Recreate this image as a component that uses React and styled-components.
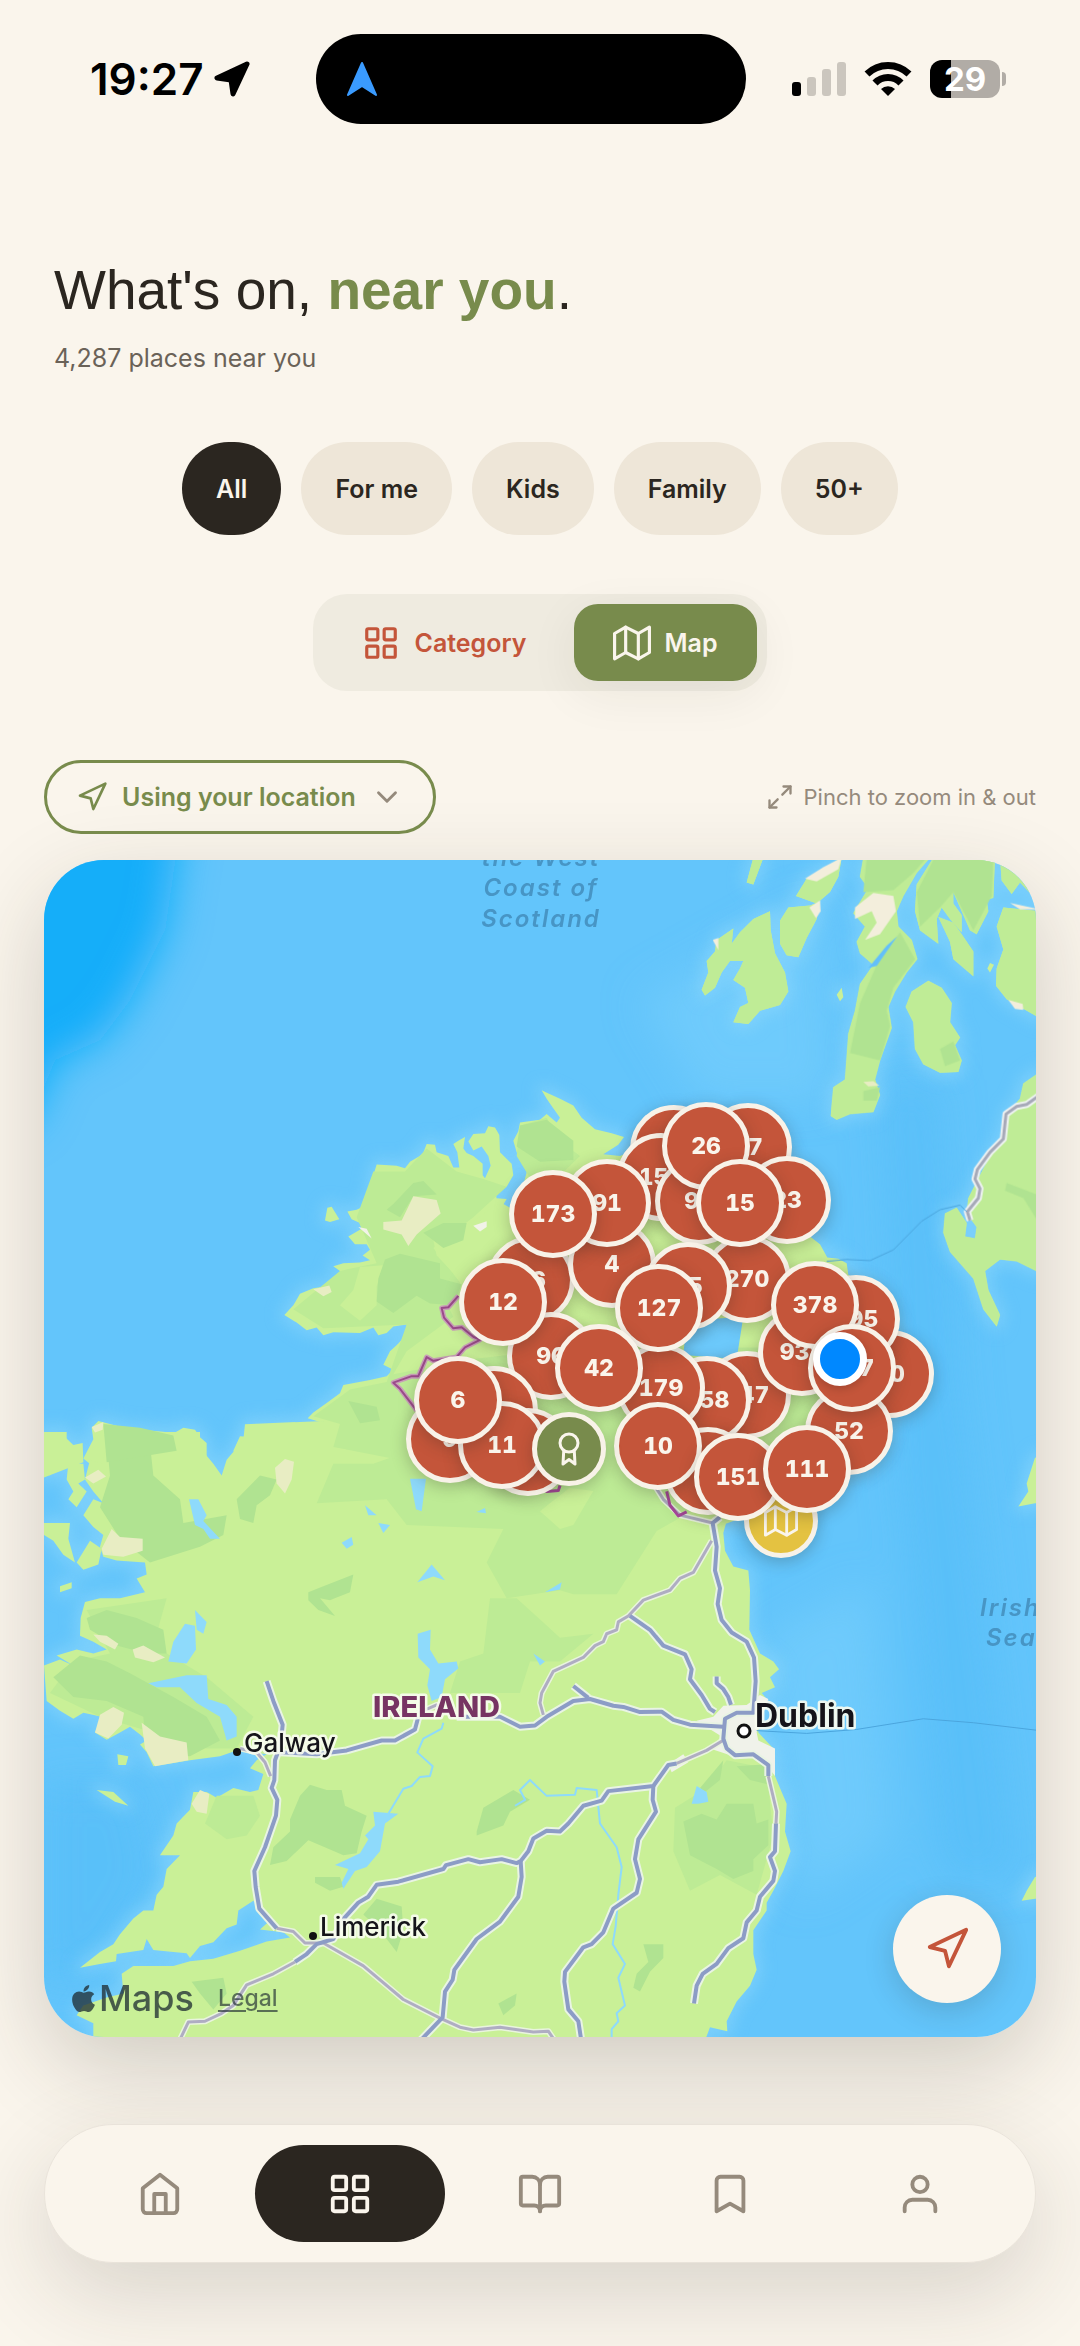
import React, { useState } from "react";
import styled, { createGlobalStyle } from "styled-components";
import { FaApple } from "react-icons/fa";

const color = {
  cream: "#faf5ec",
  ink: "#2b2620",
  sand: "#eee6d8",
  muted: "#958a7c",
  olive: "#788b4c",
  clay: "#c4553a",
  gold: "#e4c241",
};

const GlobalStyle = createGlobalStyle`
  * { box-sizing: border-box; }
  body { margin: 0; background: ${color.cream}; }
  button, select { font: inherit; color: inherit; border: 0; background: none; padding: 0; cursor: pointer; }
`;

const Page = styled.div`
  min-height: 100vh;
  display: flex;
  flex-direction: column;
  background: ${color.cream};
  color: ${color.ink};
  font-family: Inter, "Liberation Sans", sans-serif;
  overflow: hidden;
`;

/* ---------- status bar ---------- */

const StatusBar = styled.header`
  display: grid;
  grid-template-columns: 1fr 430px 1fr;
  align-items: center;
  padding: 34px 18px 0 0;
  color: #000;
`;
const Clock = styled.div`
  display: flex;
  align-items: center;
  gap: 10px;
  padding-left: 90px;
  font-size: 44px;
  line-height: 52px;
  font-weight: 600;
`;
const Island = styled.div`
  height: 90px;
  border-radius: 45px;
  background: #000;
  display: flex;
  align-items: center;
  padding-left: 30px;
`;
const Indicators = styled.div`
  display: flex;
  align-items: center;
  justify-content: flex-end;
  gap: 18px;
  padding-right: 56px;
`;
const Battery = styled.div`
  display: flex;
  align-items: center;
  gap: 2px;
  &::after {
    content: "";
    width: 4px;
    height: 14px;
    border-radius: 0 4px 4px 0;
    background: #b1aca6;
  }
`;
const BatteryCell = styled.div`
  width: 70px;
  height: 38px;
  border-radius: 12px;
  background: linear-gradient(to right, #000 30%, #b1aca6 30%);
  color: #fff;
  font-size: 33px;
  line-height: 38px;
  font-weight: 700;
  text-align: center;
`;

/* ---------- heading and filters ---------- */

const Intro = styled.section`
  padding: 128px 54px 0;
`;
const Title = styled.h1`
  margin: 0;
  font-family: "Liberation Sans", Arial, sans-serif;
  font-size: 55px;
  line-height: 76px;
  font-weight: 400;
  strong { color: ${color.olive}; font-weight: 700; }
`;
const Subtitle = styled.p`
  margin: 14px 0 0;
  font-size: 25px;
  line-height: 32px;
  color: #6a6258;
`;
const Chips = styled.div`
  display: flex;
  justify-content: center;
  gap: 20px;
  margin-top: 68px;
`;
const Chip = styled.button`
  && {
    height: 93px;
    padding: 0 34px;
    border-radius: 47px;
    font-size: 25px;
    font-weight: 600;
    background: ${(p) => (p.$on ? color.ink : color.sand)};
    color: ${(p) => (p.$on ? color.cream : color.ink)};
  }
`;
const Toggle = styled.div`
  align-self: center;
  display: flex;
  gap: 8px;
  margin-top: 59px;
  padding: 10px;
  border-radius: 34px;
  background: #efebe0;
`;
const ToggleButton = styled.button`
  && {
    display: flex;
    align-items: center;
    gap: 14px;
    height: 77px;
    padding: 0 39px;
    border-radius: 24px;
    font-size: 25px;
    font-weight: 600;
    background: ${(p) => (p.$on ? color.olive : "transparent")};
    color: ${(p) => (p.$on ? color.cream : color.clay)};
    box-shadow: ${(p) => (p.$on ? "0 12px 50px rgba(43, 38, 32, 0.07)" : "none")};
  }
`;

/* ---------- map ---------- */

const MapTools = styled.div`
  display: flex;
  align-items: center;
  justify-content: space-between;
  margin: 69px 44px 0;
  position: relative;
  z-index: 1;
`;
const LocationPicker = styled.label`
  display: flex;
  align-items: center;
  gap: 14px;
  height: 74px;
  padding: 0 29px 0 29px;
  border: 3px solid ${color.olive};
  border-radius: 37px;
  color: ${color.olive};
  select {
    appearance: none;
    outline: none;
    font-size: 25px;
    line-height: 34px;
    font-weight: 600;
    color: ${color.olive};
  }
`;
const Hint = styled.span`
  display: flex;
  align-items: center;
  gap: 10px;
  font-size: 22px;
  line-height: 32px;
  color: ${color.muted};
`;
const MapCard = styled.section`
  position: relative;
  margin: 26px 44px 0;
  aspect-ratio: 992 / 1177;
  border-radius: 60px;
  box-shadow: 0 30px 90px rgba(43, 38, 32, 0.2);
`;
const MapClip = styled.div`
  position: absolute;
  inset: 0;
  overflow: hidden;
  border-radius: 60px;
  svg { display: block; }
`;
const SeaLabel = styled.text`
  font: italic 600 24px Inter, sans-serif;
  letter-spacing: 2px;
  fill: #4795c5;
`;
const PlaceLabel = styled.text`
  font-family: Inter, sans-serif;
  font-size: ${(p) => p.$size}px;
  font-weight: ${(p) => p.$weight};
  fill: ${(p) => p.$fill || "#15141a"};
  stroke: rgba(248, 252, 240, 0.9);
  stroke-width: 5px;
  stroke-linejoin: round;
  paint-order: stroke;
`;
const Pin = styled.button`
  && {
    position: absolute;
    left: ${(p) => ((p.$x - 44) / 992) * 100}%;
    top: ${(p) => ((p.$y - 860) / 1177) * 100}%;
    width: ${(p) => p.$size || 88}px;
    height: ${(p) => p.$size || 88}px;
    transform: translate(-50%, -50%);
    display: grid;
    place-items: center;
    border: 5px solid #f8f2e8;
    border-radius: 50%;
    background: ${(p) => p.$fill || color.clay};
    color: ${color.cream};
    font-size: 23px;
    line-height: 28px;
    font-weight: 800;
    font-variant-numeric: tabular-nums;
    box-shadow: 0 4px 16px rgba(43, 38, 32, 0.26);
  }
`;
const UserDot = styled.span`
  position: absolute;
  left: ${((840 - 44) / 992) * 100}%;
  top: ${((1359 - 860) / 1177) * 100}%;
  width: 54px;
  height: 54px;
  transform: translate(-50%, -50%);
  border: 7px solid #fff;
  border-radius: 50%;
  background: #0088ff;
  box-shadow: 0 2px 10px rgba(0, 0, 0, 0.2);
`;
const Attribution = styled.div`
  position: absolute;
  left: 24px;
  bottom: 17px;
  display: flex;
  align-items: center;
  color: rgba(30, 44, 50, 0.76);
  font-size: 36px;
  line-height: 44px;
  font-weight: 500;
  a {
    margin-left: 24px;
    font-size: 23px;
    color: rgba(30, 44, 50, 0.66);
    text-underline-offset: 4px;
  }
`;
const LocateButton = styled.button`
  && {
    position: absolute;
    right: 35px;
    bottom: 34px;
    width: 108px;
    height: 108px;
    display: grid;
    place-items: center;
    border-radius: 50%;
    background: ${color.cream};
    color: ${color.clay};
    box-shadow: 0 8px 30px rgba(43, 38, 32, 0.18);
  }
`;

/* ---------- tab bar ---------- */

const TabBar = styled.nav`
  position: relative;
  display: grid;
  grid-template-columns: repeat(5, 1fr);
  margin: 87px 44px 84px;
  padding: 20px;
  border: 1px solid #e9e3da;
  border-radius: 69px;
  background: ${color.cream};
  box-shadow: 0 30px 90px rgba(43, 38, 32, 0.16);
`;
const Tab = styled.a`
  display: grid;
  place-items: center;
  height: 97px;
  border-radius: 49px;
  background: ${(p) => (p.$on ? color.ink : "transparent")};
  color: ${(p) => (p.$on ? color.cream : color.muted)};
`;

/* ---------- icons ---------- */

const shapes = {
  grid: ["M4 3h5a1 1 0 0 1 1 1v5a1 1 0 0 1-1 1H4a1 1 0 0 1-1-1V4a1 1 0 0 1 1-1z", "M15 3h5a1 1 0 0 1 1 1v5a1 1 0 0 1-1 1h-5a1 1 0 0 1-1-1V4a1 1 0 0 1 1-1z", "M15 14h5a1 1 0 0 1 1 1v5a1 1 0 0 1-1 1h-5a1 1 0 0 1-1-1v-5a1 1 0 0 1 1-1z", "M4 14h5a1 1 0 0 1 1 1v5a1 1 0 0 1-1 1H4a1 1 0 0 1-1-1v-5a1 1 0 0 1 1-1z"],
  map: ["M1 6v16l7-4 8 4 7-4V2l-7 4-8-4-7 4z", "M8 2v16", "M16 6v16"],
  arrow: ["M3 11 22 2l-9 19-2-8-8-2z"],
  chevron: ["m6 9 6 6 6-6"],
  expand: ["M15 3h6v6", "m21 3-7 7", "m3 21 7-7", "M9 21H3v-6"],
  home: ["m3 9 9-7 9 7v11a2 2 0 0 1-2 2H5a2 2 0 0 1-2-2z", "M9 22V12h6v10"],
  book: ["M12 7v14", "M3 18a1 1 0 0 1-1-1V4a1 1 0 0 1 1-1h5a4 4 0 0 1 4 4 4 4 0 0 1 4-4h5a1 1 0 0 1 1 1v13a1 1 0 0 1-1 1h-6a3 3 0 0 0-3 3 3 3 0 0 0-3-3z"],
  bookmark: ["m19 21-7-4-7 4V5a2 2 0 0 1 2-2h10a2 2 0 0 1 2 2z"],
  user: ["M20 21v-2a4 4 0 0 0-4-4H8a4 4 0 0 0-4 4v2", "M12 3a4 4 0 1 1 0 8 4 4 0 0 1 0-8z"],
  award: ["M12 2a6 6 0 1 1 0 12 6 6 0 0 1 0-12z", "M8.5 13 8 22l4-3 4 3-.5-9"],
};
const Icon = ({ name, size, width = 2, tint = "currentColor" }) => (
  <svg width={size} height={size} viewBox="0 0 24 24" fill="none" stroke={tint} strokeWidth={width} strokeLinecap="round" strokeLinejoin="round" aria-hidden="true">
    {shapes[name].map((d) => <path key={d} d={d} />)}
  </svg>
);
const LocationArrow = () => (
  <svg width="36" height="36" viewBox="0 0 36 36" aria-hidden="true">
    <path d="M33 3 3 17l14 2 2 14z" fill="#000" stroke="#000" strokeWidth="5" strokeLinejoin="round" />
  </svg>
);
const Heading = () => (
  <svg width="32" height="36" viewBox="0 0 32 36" aria-hidden="true">
    <path d="M16 2 30 34 16 25 2 34z" fill="#3a9bff" stroke="#3a9bff" strokeWidth="2" strokeLinejoin="round" />
  </svg>
);
const Signal = () => (
  <svg width="54" height="34" viewBox="0 0 54 34" aria-hidden="true">
    <rect x="0" y="20" width="9" height="14" rx="3" />
    <g fill="#cbc6be">
      <rect x="15" y="15" width="9" height="19" rx="3" />
      <rect x="30" y="7" width="9" height="27" rx="3" />
      <rect x="45" y="0" width="9" height="34" rx="3" />
    </g>
  </svg>
);
const Wifi = () => (
  <svg width="48" height="36" viewBox="0 0 48 36" fill="none" stroke="#000" strokeWidth="7" aria-hidden="true">
    <path d="M3 13a30 30 0 0 1 42 0" />
    <path d="M11 22a18 18 0 0 1 26 0" />
    <path d="M24 35l-7-7a10 10 0 0 1 14 0z" fill="#000" stroke="none" />
  </svg>
);

/* ---------- map geography ---------- */

const north = {
  ireland:
    "1505,628 1560,650 1600,668 1625,700 1665,730 1715,740 1752,750 1735,770 1690,795 1740,800 1850,760 1900,720 2050,715 2200,740 2290,900 2310,1010 2340,1030 2362,1065 2395,1068 2420,1080 2425,1110 2500,1150 2560,1250 2600,1330 2600,1400 2550,1480 2520,1560 2450,1620 2300,1650 2180,1720 2060,1760 1200,1700 620,1640 580,1570 600,1532 640,1535 700,1555 740,1560 780,1550 810,1565 830,1590 860,1600 890,1598 870,1570 900,1560 880,1545 900,1530 860,1515 890,1490 840,1495 803,1485 820,1470 860,1445 900,1420 910,1398 990,1385 1040,1375 1060,1358 1030,1345 1050,1310 1075,1290 1100,1265 1100,1240 1060,1245 1040,1262 1015,1268 1000,1248 960,1262 880,1260 850,1268 830,1248 800,1255 770,1235 733,1215 760,1190 780,1160 820,1145 860,1140 880,1130 900,1145 925,1140 960,1115 940,1105 900,1100 880,1088 910,1080 960,1078 990,1072 968,1060 990,1045 980,1030 945,1030 925,1010 965,990 960,975 935,965 922,945 950,940 980,928 998,910 995,880 1000,850 1010,822 1070,825 1095,832 1110,815 1148,795 1160,768 1185,770 1190,790 1225,800 1240,830 1258,830 1252,790 1240,768 1255,760 1275,750 1270,780 1280,792 1300,800 1328,820 1328,850 1335,858 1352,825 1345,800 1325,775 1300,785 1285,762 1300,742 1335,740 1345,722 1365,725 1378,745 1380,790 1415,820 1420,850 1400,880 1365,890 1370,910 1400,912 1350,985 1385,970 1440,910 1462,835 1430,790 1420,760 1435,735 1440,712 1500,705 1520,690 1550,712 1560,700 1520,650",
  mayo: "12,1580 20,1555 70,1530 100,1555 128,1550 130,1600 12,1640",
  mayoEast: "130,1590 160,1540 155,1510 175,1492 210,1500 260,1512 370,1520 400,1525 430,1510 465,1515 480,1535 500,1550 500,1590 420,1640 200,1640",
  arranmore: "862,935 875,932 898,965 870,972 855,968",
};
const scotland = [
  "690,160 692,210 705,270 735,320 745,370 720,405 660,420 625,455 580,450 600,410 625,400 615,360 580,340 600,310 610,290 570,290 545,320 525,360 495,380 485,365 505,320 500,290 525,265 530,235 580,205 575,245 600,215 640,180",
  "720,185 745,150 810,145 840,135 830,180 800,230 775,280 740,275 720,245",
  "800,75 850,50 905,20 895,70 870,110 830,140 768,120",
  "640,20 670,20 640,90 620,85",
  "970,20 1170,20 1130,60 1090,120 1070,160 1075,200 1115,235 1132,285 1100,320 1065,370 1045,410 1055,465 1020,550 1005,600 1020,640 1000,685 930,690 890,705 872,695 880,620 915,600 925,480 945,420 960,350 1000,300 960,270 950,240 975,200 940,165 985,100 960,70",
  "1180,20 1365,20 1360,125 1340,130 1345,160 1310,220 1290,210 1240,110 1240,140 1265,170 1265,215 1230,180 1205,150 1190,180 1195,245 1140,210 1125,160 1130,90",
  "1195,175 1240,190 1265,220 1300,265 1300,330 1240,285 1230,240",
  "1165,342 1205,360 1235,400 1230,450 1260,490 1245,510 1265,550 1255,580 1200,582 1150,560 1125,520 1120,450 1097,410 1115,370",
  "1390,150 1500,160 1500,440 1400,390 1368,355 1370,310 1390,260 1370,200",
  "1380,20 1500,20 1500,140 1440,85 1415,115 1385,80",
  "1500,580 1450,610 1440,650 1400,690 1390,740 1350,800 1320,850 1285,910 1280,950 1310,985 1305,1015 1275,1010 1280,975 1250,935 1215,950 1210,1000 1230,1050 1300,1120 1330,1200 1370,1245 1380,1215 1345,1150 1335,1100 1380,1070 1430,1075 1500,1105",
  "905,360 910,385 900,395 890,378",
  "1350,295 1362,300 1350,320 1342,310",
];
const south = [
  "480,-20 480,0 490,30 520,60 545,90 560,50 590,20 610,0 615,-40 1200,-60 2300,0 2280,130 2060,205 2050,235 2055,280 2080,320 2125,330 2130,380 2128,480 2160,540 2200,560 2217,580 2190,600 2205,625 2165,640 2180,655 2160,690 2155,740 2200,780 2205,850 2225,890 2240,920 2235,990 2252,1040 2230,1090 2200,1140 2180,1170 2180,1190 2140,1240 2140,1300 2150,1340 2130,1380 2090,1420 2060,1470 2062,1495 2010,1485 1990,1530 160,1530 160,1475 110,1455 130,1430 200,1410 250,1400 245,1350 280,1330 400,1330 450,1318 520,1312 600,1292 680,1268 750,1258 730,1245 660,1238 690,1215 640,1165 595,1190 590,1225 560,1235 520,1270 480,1280 450,1310 440,1298 400,1295 340,1290 320,1262 310,1290 230,1300 228,1318 180,1325 120,1335 180,1295 220,1275 240,1250 280,1210 310,1190 340,1190 350,1150 370,1130 380,1085 420,1050 360,1050 400,1000 410,970 450,935 460,890 500,890 530,905 580,880 630,890 655,885 670,845 630,830 650,810 680,795 590,785 540,800 450,810 340,825 320,790 300,770 320,760 300,745 270,725 240,740 200,758 165,740 185,700 130,690 100,705 60,685 20,660 12,570 60,555 100,570 50,545 110,530 160,540 200,530 160,510 120,495 122,450 135,410 180,400 240,400 315,385 290,350 320,340 315,310 230,305 190,295 180,270 190,240 160,220 130,190 160,150 190,160 160,130 135,100 150,50 190,60 200,-20",
  "12,210 90,210 85,250 105,310 70,290 40,255 12,240",
  "0,-20 80,-20 80,20 50,50 30,90 0,70",
  "85,60 130,60 135,100 115,110 140,130 110,170 85,150 100,130 80,100",
  "110,310 150,255 185,275 175,315 130,328",
  "170,885 220,890 265,925 225,915",
  "60,370 95,360 95,375 60,385",
  "232,795 265,800 258,822 235,822",
  "2985,45 2960,110 2965,130 2935,168 2985,160 3010,160 3010,40",
  "2985,1105 2960,1140 2945,1165 2985,1160 3010,1160 3010,1100",
];
const northShade = [
  ["#bdeb95", "1000,840 1095,840 1160,780 1250,840 1330,860 1400,880 1300,960 1180,1040 1260,1130 1265,1165 1200,1150 1240,1220 1100,1310 1060,1370 1300,1330 1600,1300 2200,1300 2500,1400 2450,1560 1700,1680 1350,1640 880,1560 900,1500 820,1480 930,1410 1040,1390 1100,1240 850,1250 760,1200 900,1100 1010,1080 950,960"],
  ["#bdeb95", "1440,720 1520,700 1560,760 1620,800 1500,900 1430,800"],
  ["#c9f097", "1180,1020 1300,970 1380,920 1440,950 1400,1100 1300,1160 1190,1060"],
  ["#c9f097", "960,1090 1030,1085 1010,1140 1010,1190 960,1230 900,1190 940,1150"],
  ["#b0e391", "1015,1120 1035,1070 1080,1055 1200,1080 1200,1120 1265,1135 1240,1190 1170,1185 1130,1165 1060,1210 1010,1180"],
  ["#b0e391", "1150,1000 1210,975 1280,975 1270,1020 1210,1040"],
  ["#b0e391", "1440,720 1520,705 1600,760 1600,810 1500,815 1430,775"],
  ["#b0e391", "925,1440 1010,1455 1020,1490 960,1498"],
  ["#b0e391", "1190,1575 1260,1520 1400,1540 1420,1620 1250,1620"],
  ["#b0e391", "1120,870 1150,865 1190,900 1120,905 1080,960 1040,940 1060,925"],
  ["#e8edc3", "1030,972 1085,968 1120,905 1190,915 1202,950 1130,1005 1105,1035 1085,1005 1030,992"],
  ["#e8edc3", "820,1148 868,1138 875,1155 850,1166"],
  ["#f2f2e8", "1300,982 1340,970 1340,985 1320,997"],
  ["#f2f2e8", "955,985 980,990 995,1015 975,1000"],
  ["#b0e391", "190,1500 300,1510 400,1530 410,1570 200,1600"],
  ["#e8edc3", "155,1508 190,1495 188,1515 165,1522"],
  ["#6cc9fb", "1940,1230 2110,1220 2090,1330 1930,1320"],
];
const scotlandShade = [
  ["#b0e391", "980,20 1160,20 1120,60 1060,105 970,110"],
  ["#b0e391", "1180,25 1360,25 1355,120 1300,210 1240,110 1200,150 1140,200 1130,110"],
  ["#b0e391", "1010,300 1080,215 1125,285 1060,360 1040,420 1050,460 1020,550 930,530 960,400"],
  ["#b0e391", "1200,520 1240,500 1260,550 1215,565"],
  ["#b0e391", "970,630 1020,620 1010,655 970,655"],
  ["#b0e391", "1400,870 1490,900 1500,980 1450,910 1395,890"],
  ["#f3eedc", "945,150 1000,112 1060,120 1068,160 1020,220 975,235 1010,190 995,160 945,180"],
  ["#f3eedc", "795,75 850,45 905,20 895,50 830,82"],
  ["#f3eedc", "808,150 840,132 842,160 828,178"],
  ["#f3eedc", "518,235 535,230 535,262"],
  ["#f3eedc", "1405,392 1448,402 1450,418 1425,415"],
  ["#f3eedc", "1410,138 1500,155 1440,155"],
  ["#e8edc3", "970,606 1000,604 1018,616 985,618"],
];
const southShade = [
  ["#bdeb95", "880,60 1000,60 1200,0 2060,0 2060,130 1850,230 1730,390 1600,390 1560,380 1400,400 1340,310 1390,225 1100,215 1040,150 830,160"],
  ["#bdeb95", "1350,400 1430,400 1560,500 1660,490 1560,560 1470,560 1440,640 1230,640 1260,560 1330,540"],
  ["#bdeb95", "530,900 640,900 660,950 620,1000 560,1010 495,970"],
  ["#bdeb95", "140,430 380,400 340,520 500,600 640,700 590,780 500,780 180,700 30,640 100,560 210,540"],
  ["#c9f097", "1500,180 1560,225 1600,215 1680,100 1590,120"],
  ["#b0e391", "200,0 330,10 340,90 420,150 430,210 560,190 550,240 480,270 330,310 240,250 180,170 210,90"],
  ["#b0e391", "40,600 120,545 200,560 270,590 400,650 500,700 540,760 450,800 320,790 310,700 200,660 100,650"],
  ["#b0e391", "140,450 200,430 290,450 370,480 380,540 320,540 230,520 150,480"],
  ["#b0e391", "590,150 660,90 710,100 690,140 650,165 640,210 600,200"],
  ["#b0e391", "805,385 850,370 940,340 930,385 870,405 840,400 885,445 835,430 805,405"],
  ["#b0e391", "810,872 860,885 905,885 915,925 980,950 965,990 950,1045 910,1050 805,1012 740,1065 690,1075 700,1030 750,990 750,960 780,900"],
  ["#b0e391", "1310,990 1330,930 1420,885 1470,910 1410,940 1390,975 1310,1000"],
  ["#b0e391", "825,1105 900,1105 910,1130 870,1140 825,1120"],
  ["#b0e391", "970,1200 1010,1160 1085,1180 1090,1240 1070,1295 1020,1240"],
  ["#b0e391", "455,1370 550,1360 560,1400 520,1440 480,1400"],
  ["#b0e391", "1375,1425 1430,1400 1425,1430 1390,1455"],
  ["#b0e391", "1810,1275 1870,1275 1870,1310 1830,1345 1800,1395 1780,1385 1790,1350 1825,1320"],
  ["#bdeb95", "1905,930 2000,880 2060,810 2180,830 2200,1000 2150,1150 2040,1100 1950,1140 1900,1040"],
  ["#b0e391", "1930,965 1985,945 2030,960 2060,920 2140,920 2150,970 2185,960 2185,1025 2140,1060 2140,1090 2080,1110 2030,1085 1950,1050"],
  ["#b0e391", "1980,880 2050,810 2040,860 1995,890"],
  ["#b0e391", "2090,825 2180,820 2180,870 2130,860"],
  ["#e8edc3", "705,70 735,48 762,55 755,100 735,135 710,110"],
  ["#e8edc3", "185,275 215,225 240,245 308,250 308,280 250,295 190,290"],
  ["#e8edc3", "135,95 175,75 198,92 160,110"],
  ["#e8edc3", "165,740 180,695 220,675 252,690 245,720 205,755"],
  ["#e8edc3", "305,715 360,750 440,765 445,810 345,825 315,780"],
  ["#e8edc3", "160,492 200,495 235,515 225,530 180,510"],
  ["#e8edc3", "278,530 310,520 375,550 340,562 285,550"],
  ["#e8edc3", "455,920 480,885 508,895 500,945 470,940"],
  ["#f0f2ea", "1970,710 2020,700 2050,672 2120,670 2160,645 2185,655 2150,740 2155,760 2205,780 2205,850 2160,800 2080,800 2010,780 2045,750"],
  ["#f0f2ea", "1885,820 1930,795 1945,815 1895,840"],
];
const lakes = [
  "1133,490 1172,480 1170,530 1195,565 1250,560 1255,578 1215,605 1205,650 1175,660 1162,620 1170,580 1135,550",
  "1000,940 1075,945 1035,970 1020,1040 980,1080 945,1090 910,1135 905,1120 925,1085 885,1075 960,1045 985,1010 975,1000 1005,975",
  "325,615 440,595 500,595 505,655 560,670 590,700 590,750 560,760 540,700 470,665 420,625 350,625",
  "385,560 400,510 435,465 465,470 468,530 440,565",
  "465,430 500,460 490,490 470,480",
  "447,150 475,150 500,190 490,205 540,250 510,250 490,225 465,215",
  "1110,98 1158,98 1145,180 1128,175",
  "975,165 1010,190 985,190",
  "1015,210 1050,215 1030,235",
  "1132,360 1175,315 1215,355 1180,345",
  "905,260 935,245 940,265 920,275",
  "1955,920 1970,875 2000,890 2005,915 1975,920",
  "1515,385 1565,360 1560,378",
  "1480,540 1515,560 1500,570",
  "1310,182 1335,172 1338,185",
];
const rivers = [
  "1210,715 1205,730 1150,755 1132,790 1178,825 1170,850 1140,852 1115,875 1090,882 1045,945",
  "1425,925 1455,910 1440,885 1470,860 1520,900 1605,897 1610,880 1670,885 1680,970 1730,1030 1745,1080 1735,1150 1727,1230 1718,1275 1755,1325 1735,1360 1755,1430 1730,1450 1735,1470 1715,1490 1715,1520",
];
const minorRoads = [
  "710,1235 760,1243 795,1272 850,1272 970,1330 1090,1415 1200,1462 1260,1485 1300,1492 1380,1485 1480,1497 1525,1495 1545,1520",
  "765,1320 700,1350 620,1378 580,1430 545,1450 495,1470 445,1472 415,1525",
  "1910,818 2000,785 2055,757",
  "2015,255 1960,335 1920,350 1890,380 1810,405 1765,445 1735,460 1730,480 1700,490 1690,510 1665,520 1630,550 1540,585 1505,640 1500,665 1510,695",
  "600,780 650,790 675,815 692,850",
  "1135,690 1190,670 1250,700",
  "2185,850 2210,940 2208,970",
  "1840,110 1870,150 1920,190 2018,210",
];
const motorways = [
  "680,610 700,660 728,720 722,770 705,810 703,860 695,880 712,910 708,950 675,1030 643,1090 647,1130 658,1185 710,1235",
  "722,790 830,795 920,785 1025,760 1065,760 1125,732 1135,700",
  "1250,700 1380,700 1440,725 1485,722 1520,700 1600,660 1650,655 1720,672 1750,675 1800,688 1865,687 1900,708 1950,720 2050,725",
  "765,1320 800,1300 830,1275 880,1262 912,1210 955,1170 985,1155 1010,1125 1075,1117 1210,1085 1218,1075 1285,1060 1320,1068 1385,1060 1430,1070 1442,1065 1465,1040 1480,1008 1520,988 1560,990 1585,970 1630,925 1685,912 1705,888 1840,875 1885,822 1910,818",
  "1442,1065 1445,1105 1435,1155 1380,1218 1310,1262 1243,1340 1238,1365 1215,1395 1208,1460 1140,1520",
  "1840,875 1838,910 1848,940 1795,1010 1785,1060 1800,1110 1790,1145 1720,1185 1690,1245 1655,1275 1630,1283 1575,1345 1573,1370 1585,1440 1615,1470 1625,1525",
  "2040,195 2018,210 2030,270 2025,330 2040,375 2033,415 2045,455 2075,487 2120,510 2142,550 2147,610 2140,690 2090,690 2055,705 2050,755 2060,780 2085,797 2140,795 2185,822 2185,850",
  "2208,970 2205,1040 2190,1055 2205,1090 2200,1115 2160,1155 2150,1190 2120,1220 2110,1260 2065,1285 2030,1325 1988,1350 1970,1380 1962,1425",
  "1770,445 1830,480 1870,520 1935,542 1955,580 1950,605 1985,645 2010,680 2025,688",
  "2030,598 2030,615 2050,630 2065,650 2073,670",
  "1600,622 1645,652",
];
const border = "1255,1165 1225,1195 1205,1197 1212,1222 1240,1250 1265,1247 1300,1272 1320,1280 1275,1300 1250,1325 1180,1335 1160,1325 1135,1375 1115,1375 1060,1392 1080,1408 1130,1465";
const galloway = "1500,640 1460,665 1430,670 1398,690 1390,755 1350,790 1312,835 1305,860 1320,885 1315,910 1282,945 1290,968";

const NORTH = "translate(40 850) scale(0.33333 0.38265)";
const SCOTLAND = "translate(540 850) scale(0.33333 0.38265)";
const SOUTH = "translate(40 1440) scale(0.33333 0.39541)";

const Lines = ({ items, stroke, width }) =>
  items.map((p) => <polyline key={p} points={p} fill="none" stroke={stroke} strokeWidth={width} strokeLinejoin="round" vectorEffect="non-scaling-stroke" />);
const Areas = ({ items }) => items.map(([fill, p]) => <polygon key={p} points={p} fill={fill} />);
const Land = () => (
  <>
    <g transform={NORTH}>{Object.values(north).map((p) => <polygon key={p} points={p} />)}</g>
    <g transform={SCOTLAND}>{scotland.map((p) => <polygon key={p} points={p} />)}</g>
    <g transform={SOUTH}>{south.map((p) => <polygon key={p} points={p} />)}</g>
  </>
);

const Terrain = () => (
  <svg width="100%" height="100%" viewBox="44 860 992 1177" role="img" aria-label="Map of Ireland">
    <defs>
      <filter id="deep" x="-50%" y="-50%" width="200%" height="200%"><feGaussianBlur stdDeviation="20" /></filter>
      <filter id="shore"><feGaussianBlur stdDeviation="8" /></filter>
    </defs>
    <rect x="44" y="860" width="992" height="1177" fill="#63c5fb" />
    <g filter="url(#deep)">
      <path d="M-20 800H184L165 930 130 1000 100 1040 55 1060 30 1120-20 1140z" fill="#12abf9" opacity=".92" />
      <path d="M640 1000 820 900 830 1100 700 1100zM760 1640l110-60 20 260-90 60z" fill="#74cdfc" opacity=".7" />
      <path d="M880 1080h60l20 300 60 500h-80l-40-400zM40 1780h100l20 100-60 100H40z" fill="#53bbf8" opacity=".55" />
    </g>
    <g filter="url(#shore)" fill="#8fd8fc" stroke="#8fd8fc" strokeWidth="30" strokeLinejoin="round" opacity=".55"><Land /></g>
    <g fill="#c9f097"><Land /></g>
    <g transform={SOUTH}><Areas items={southShade} /></g>
    <g transform={NORTH}><Areas items={northShade} /></g>
    <g transform={SCOTLAND}>
      <g fill="#bdeb95">{scotland.slice(0, 11).map((p) => <polygon key={p} points={p} opacity=".85" />)}</g>
      <Areas items={scotlandShade} />
      <polygon points="985,308 1010,303 1072,225 1040,250" fill="#63bffa" />
      <Lines items={[galloway]} stroke="#eef2f2" width={7} />
      <Lines items={[galloway]} stroke="#a6a9b8" width={3} />
      <Lines items={["860,1075 920,1070 990,1073 1060,1045 1145,970 1200,940 1260,928 1280,945"]} stroke="#4ba5dd" width={1} />
    </g>
    <g transform={SOUTH}>
      {lakes.map((p) => <polygon key={p} points={p} fill="#8edafb" />)}
      <Lines items={rivers} stroke="#8edafb" width={2} />
      <Lines items={["2150,735 2300,742 2450,732 2650,705 2800,715 3000,735"]} stroke="#4ba5dd" width={1} />
      <Lines items={minorRoads} stroke="#e9f4de" width={6} />
      <Lines items={motorways} stroke="#e9f4e4" width={8} />
      <Lines items={minorRoads} stroke="#afadc2" width={3} />
      <Lines items={motorways} stroke="#8c9cc6" width={4} />
      <Lines items={["1880,130 1890,165 1915,192 1940,182", "1500,125 1520,130 1555,128 1560,115"]} stroke="#a8489c" width={3} />
    </g>
    <g transform={NORTH}>
      <Lines items={[border]} stroke="#c9a0b8" width={5} />
      <Lines items={[border]} stroke="#9c4a8c" width={2} />
    </g>
    <g textAnchor="middle">
      <SeaLabel x="541" y="866">the West</SeaLabel>
      <SeaLabel x="541" y="896">Coast of</SeaLabel>
      <SeaLabel x="541" y="927">Scotland</SeaLabel>
    </g>
    <SeaLabel x="980" y="1616">Irish</SeaLabel>
    <SeaLabel x="986" y="1646">Sea</SeaLabel>
    <PlaceLabel x="373" y="1717" $size={29} $weight={800} $fill="#773463">IRELAND</PlaceLabel>
    <PlaceLabel x="244" y="1752" $size={26} $weight={500}>Galway</PlaceLabel>
    <PlaceLabel x="320" y="1936" $size={26} $weight={500}>Limerick</PlaceLabel>
    <PlaceLabel x="755" y="1727" $size={32} $weight={700}>Dublin</PlaceLabel>
    <circle cx="237" cy="1752" r="4" fill="#111" />
    <circle cx="313" cy="1936" r="4" fill="#111" />
    <circle cx="744" cy="1731" r="6" fill="#fff" stroke="#111" strokeWidth="3" />
  </svg>
);

const clusters = [
  { x: 674, y: 1149, n: "" },
  { x: 748, y: 1147, n: "17" },
  { x: 661, y: 1177, n: "152" },
  { x: 699, y: 1201, n: "98" },
  { x: 787, y: 1200, n: "23" },
  { x: 706, y: 1146, n: "26" },
  { x: 531, y: 1280, n: "16" },
  { x: 612, y: 1264, n: "4" },
  { x: 747, y: 1279, n: "270" },
  { x: 688, y: 1286, n: "25" },
  { x: 740, y: 1203, n: "15" },
  { x: 607, y: 1203, n: "91" },
  { x: 553, y: 1214, n: "173" },
  { x: 551, y: 1356, n: "96" },
  { x: 503, y: 1302, n: "12" },
  { x: 747, y: 1395, n: "147" },
  { x: 707, y: 1400, n: "158" },
  { x: 661, y: 1388, n: "179" },
  { x: 659, y: 1308, n: "127" },
  { x: 599, y: 1368, n: "42" },
  { x: 890, y: 1374, n: "20" },
  { x: 856, y: 1319, n: "195" },
  { x: 802, y: 1352, n: "938" },
  { x: 815, y: 1305, n: "378" },
  { x: 849, y: 1431, n: "52" },
  { x: 852, y: 1368, n: "137" },
  { x: 708, y: 1471, n: "" },
  { x: 658, y: 1446, n: "10" },
  { x: 738, y: 1477, n: "151" },
  { x: 807, y: 1469, n: "111" },
  { x: 494, y: 1410, n: "" },
  { x: 528, y: 1452, n: "" },
  { x: 450, y: 1439, n: "9" },
  { x: 502, y: 1445, n: "11" },
  { x: 458, y: 1400, n: "6" },
];

const tabs = [
  ["home", "Home"],
  ["grid", "Explore"],
  ["book", "Guide"],
  ["bookmark", "Saved"],
  ["user", "Profile"],
];

export default function App() {
  const [audience, setAudience] = useState("All");
  const [view, setView] = useState("Map");
  return (
    <Page>
      <GlobalStyle />
      <StatusBar>
        <Clock>19:27<LocationArrow /></Clock>
        <Island><Heading /></Island>
        <Indicators>
          <Signal />
          <Wifi />
          <Battery><BatteryCell>29</BatteryCell></Battery>
        </Indicators>
      </StatusBar>

      <Intro>
        <Title>What's on, <strong>near you</strong>.</Title>
        <Subtitle>4,287 places near you</Subtitle>
      </Intro>

      <Chips>
        {["All", "For me", "Kids", "Family", "50+"].map((c) => (
          <Chip key={c} $on={c === audience} aria-pressed={c === audience} onClick={() => setAudience(c)}>{c}</Chip>
        ))}
      </Chips>

      <Toggle>
        {[["Category", "grid"], ["Map", "map"]].map(([label, icon]) => (
          <ToggleButton key={label} $on={view === label} aria-pressed={view === label} onClick={() => setView(label)}>
            <Icon name={icon} size={38} />
            {label}
          </ToggleButton>
        ))}
      </Toggle>

      <MapTools>
        <LocationPicker>
          <Icon name="arrow" size={32} />
          <select aria-label="Location">
            <option>Using your location</option>
          </select>
          <Icon name="chevron" size={34} tint={color.muted} />
        </LocationPicker>
        <Hint><Icon name="expand" size={28} />Pinch to zoom in &amp; out</Hint>
      </MapTools>

      <MapCard>
        <MapClip>
          <Terrain />
          <Pin $x={781} $y={1521} $size={74} $fill={color.gold} aria-label="Trail"><Icon name="map" size={34} /></Pin>
          {clusters.map((c) => (
            <Pin key={`${c.x}-${c.y}`} $x={c.x} $y={c.y} aria-label={`${c.n} places`}>{c.n}</Pin>
          ))}
          <Pin $x={569} $y={1449} $size={74} $fill={color.olive} aria-label="Award"><Icon name="award" size={36} /></Pin>
          <UserDot />
          <Attribution>
            <FaApple size={31} aria-hidden="true" />
            Maps
            <a href="#legal">Legal</a>
          </Attribution>
          <LocateButton aria-label="Centre on my location"><Icon name="arrow" size={46} /></LocateButton>
        </MapClip>
      </MapCard>

      <TabBar>
        {tabs.map(([icon, label]) => (
          <Tab key={icon} href={`#${icon}`} aria-label={label} $on={icon === "grid"}><Icon name={icon} size={46} /></Tab>
        ))}
      </TabBar>
    </Page>
  );
}
